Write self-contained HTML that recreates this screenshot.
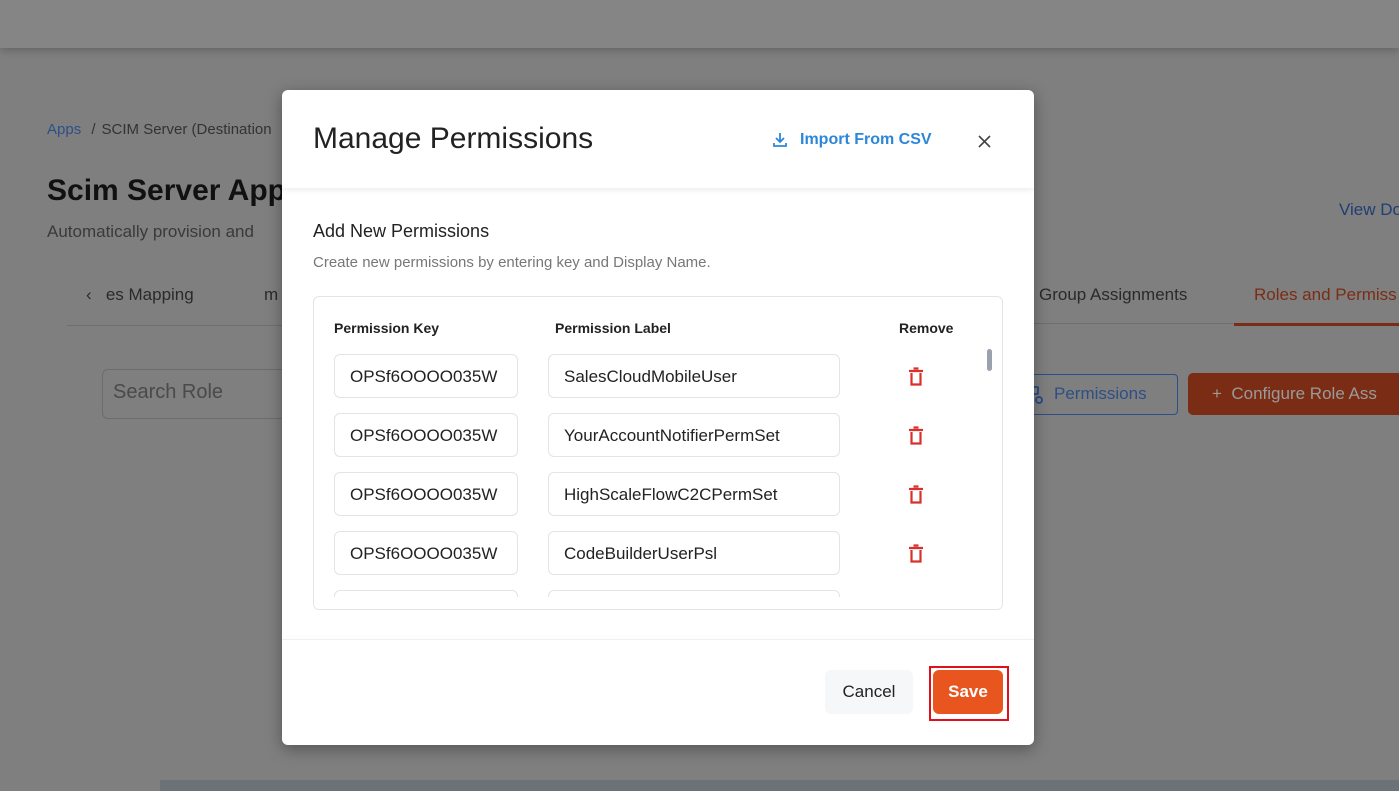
<!DOCTYPE html>
<html><head><style>
*{box-sizing:border-box;margin:0;padding:0}
body{width:1399px;height:791px;overflow:hidden;background:#7f7f7f;font-family:"Liberation Sans",sans-serif;position:relative}
.abs{position:absolute;white-space:nowrap}
.modal{position:absolute;left:282px;top:90px;width:752px;height:655px;background:#fff;border-radius:6px;box-shadow:0 4px 16px rgba(0,0,0,.35);overflow:hidden}
.inp{position:absolute;height:44px;border:1px solid #e2e4e8;border-radius:6px;font-size:17px;color:#222;padding:12px 15px;background:#fff}
.trash{position:absolute;width:16px;height:20px}
</style></head><body>
<div class="abs" style="left:0;top:0;width:1399px;height:48px;background:#858585;box-shadow:0 3px 8px rgba(0,0,0,.2)"></div>
<div class="abs" style="left:47px;top:121px;font-size:15px;color:#2d4f86">Apps <span style="color:#333;margin:0 6px">/</span><span style="color:#333">SCIM Server (Destination</span></div>
<div class="abs" style="left:47px;top:174px;font-size:30px;font-weight:bold;color:#111">Scim Server App</div>
<div class="abs" style="left:47px;top:222px;font-size:17px;color:#3a3a3a">Automatically provision and</div>
<div class="abs" style="left:86px;top:285px;font-size:17px;color:#2a2a2a">‹ &nbsp;&nbsp;es Mapping</div>
<div class="abs" style="left:264px;top:285px;font-size:17px;color:#2a2a2a">m</div>
<div class="abs" style="left:67px;top:325px;width:220px;height:1px;background:#6f6f6f"></div>
<div class="abs" style="left:102px;top:369px;width:200px;height:50px;border:1px solid #6c6c6c;border-radius:6px"></div>
<div class="abs" style="left:113px;top:381px;font-size:20px;color:#4a4a4a">Search Role</div>
<div class="abs" style="left:1339px;top:200px;font-size:17px;color:#1f3f73">View Do</div>
<div class="abs" style="left:1039px;top:285px;font-size:17px;color:#2a2a2a">Group Assignments</div>
<div class="abs" style="left:1254px;top:285px;font-size:17px;color:#7a2d14">Roles and Permiss</div>
<div class="abs" style="left:1034px;top:323px;width:365px;height:1px;background:#6f6f6f"></div>
<div class="abs" style="left:1234px;top:323px;width:165px;height:3px;background:#7a2d14"></div>
<div class="abs" style="left:1010px;top:374px;width:168px;height:41px;border:1px solid #2d4f86;border-radius:4px"></div>
<svg class="abs" style="left:1030px;top:385px" width="14" height="20" viewBox="0 0 14 20" fill="none" stroke="#2d4f86" stroke-width="2"><rect x="2" y="2" width="6" height="7" rx="1"/><circle cx="9" cy="15" r="3"/></svg>
<div class="abs" style="left:1054px;top:384px;font-size:17px;color:#2d4f86">Permissions</div>
<div class="abs" style="left:1188px;top:373px;width:220px;height:42px;background:#7a2d14;border-radius:5px"></div>
<div class="abs" style="left:1212px;top:384px;font-size:17px;color:#9a9a9a">+ &nbsp;Configure Role Ass</div>
<div class="abs" style="left:160px;top:780px;width:1239px;height:11px;background:#6b7378"></div>

<div class="modal">
 <div class="abs" style="left:0;top:0;width:752px;height:98px;box-shadow:0 2px 6px rgba(0,0,0,.08)"></div>
 <div class="abs" style="left:31px;top:32px;font-size:30px;color:#222">Manage Permissions</div>
 <svg class="abs" style="left:490px;top:42px" width="16" height="16" viewBox="0 0 16 16" fill="none" stroke="#2c87d8" stroke-width="1.8"><path d="M8 1v9M4 6l4 4 4-4M2 11v3h12v-3"/></svg>
 <div class="abs" style="left:518px;top:41px;font-size:16px;font-weight:bold;color:#2c87d8">Import From CSV</div>
 <svg class="abs" style="left:696px;top:45px" width="13" height="13" viewBox="0 0 13 13" stroke="#444" stroke-width="1.6"><path d="M1 1l11 11M12 1L1 12"/></svg>
 <div class="abs" style="left:31px;top:131px;font-size:18px;color:#222">Add New Permissions</div>
 <div class="abs" style="left:31px;top:164px;font-size:15px;color:#777">Create new permissions by entering key and Display Name.</div>
 <div class="abs" style="left:31px;top:206px;width:690px;height:314px;border:1px solid #e2e4e8;border-radius:6px;overflow:hidden">
  <div class="abs" style="left:20px;top:23px;font-size:14px;font-weight:bold;color:#222">Permission Key</div>
  <div class="abs" style="left:241px;top:23px;font-size:14px;font-weight:bold;color:#222">Permission Label</div>
  <div class="abs" style="left:585px;top:23px;font-size:14px;font-weight:bold;color:#222">Remove</div>
  <div class="abs" style="left:673px;top:52px;width:5px;height:22px;background:#9aa3ad;border-radius:3px"></div>
  <div class="inp" style="left:20px;top:57px;width:184px">OPSf6OOOO035W</div>
  <div class="inp" style="left:234px;top:57px;width:292px">SalesCloudMobileUser</div>
  <div class="inp" style="left:20px;top:116px;width:184px">OPSf6OOOO035W</div>
  <div class="inp" style="left:234px;top:116px;width:292px">YourAccountNotifierPermSet</div>
  <div class="inp" style="left:20px;top:175px;width:184px">OPSf6OOOO035W</div>
  <div class="inp" style="left:234px;top:175px;width:292px">HighScaleFlowC2CPermSet</div>
  <div class="inp" style="left:20px;top:234px;width:184px">OPSf6OOOO035W</div>
  <div class="inp" style="left:234px;top:234px;width:292px">CodeBuilderUserPsl</div>
  <div class="inp" style="left:20px;top:293px;width:184px"></div>
  <div class="inp" style="left:234px;top:293px;width:292px"></div>
  <div class="abs" style="left:0;top:300px;width:690px;height:14px;background:#fff"></div>
  <svg class="trash" style="left:594px;top:70px" viewBox="0 0 16 20" fill="none" stroke="#d9302c" stroke-width="2.2"><path d="M1 4h14M5.5 1.5h5M3.5 6v11.5h9V6"/></svg>
  <svg class="trash" style="left:594px;top:129px" viewBox="0 0 16 20" fill="none" stroke="#d9302c" stroke-width="2.2"><path d="M1 4h14M5.5 1.5h5M3.5 6v11.5h9V6"/></svg>
  <svg class="trash" style="left:594px;top:188px" viewBox="0 0 16 20" fill="none" stroke="#d9302c" stroke-width="2.2"><path d="M1 4h14M5.5 1.5h5M3.5 6v11.5h9V6"/></svg>
  <svg class="trash" style="left:594px;top:247px" viewBox="0 0 16 20" fill="none" stroke="#d9302c" stroke-width="2.2"><path d="M1 4h14M5.5 1.5h5M3.5 6v11.5h9V6"/></svg>
 </div>
 <div class="abs" style="left:0;top:549px;width:752px;height:1px;background:#eef0f2;box-shadow:0 -2px 6px rgba(0,0,0,.04)"></div>
 <div class="abs" style="left:543px;top:580px;width:88px;height:44px;background:#f6f7f8;border-radius:6px;font-size:17px;color:#222;text-align:center;line-height:44px">Cancel</div>
 <div class="abs" style="left:647px;top:576px;width:80px;height:55px;border:2px solid #e0101a"></div>
 <div class="abs" style="left:651px;top:580px;width:70px;height:44px;background:#e9551f;border-radius:6px;font-size:17px;font-weight:bold;color:#fff;text-align:center;line-height:44px">Save</div>
</div>
</body></html>
